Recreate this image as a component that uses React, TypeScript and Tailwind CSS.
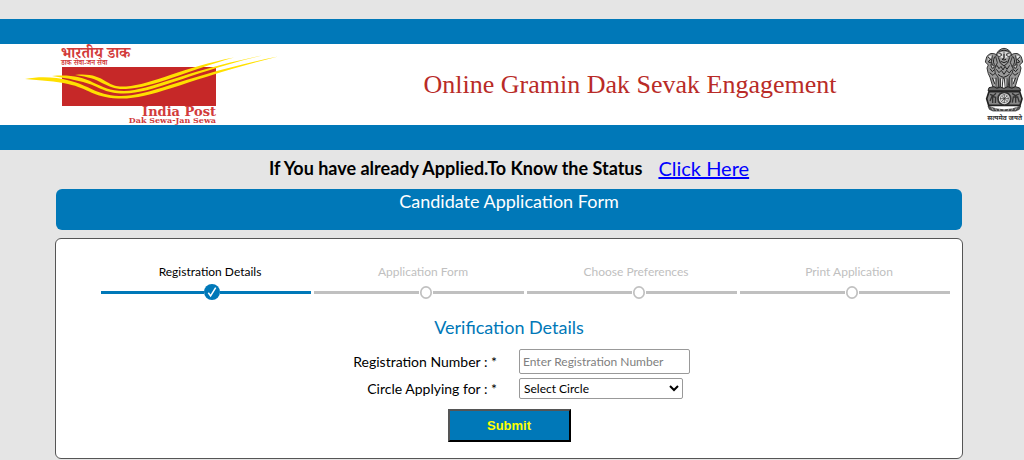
const steps = [
  { label: "Registration Details", active: true },
  { label: "Application Form", active: false },
  { label: "Choose Preferences", active: false },
  { label: "Print Application", active: false },
];

export default function App() {
  return (
    <div className="bg-[#e5e5e5] pt-[19px] font-['Lato','Open_Sans',sans-serif] text-black">
      <Header />
      <main className="pb-px pl-[55px] pr-[61px]">
        <p className="flex h-[39px] items-center justify-center gap-4 pb-1 text-lg font-bold">
          If You have already Applied.To Know the Status
          <a href="#status" className="text-xl font-normal text-[#0000ff] underline">
            Click Here
          </a>
        </p>
        <h2 className="mx-px h-[41px] rounded-md bg-[#0078b8] text-center text-lg leading-6 text-white">
          Candidate Application Form
        </h2>
        <section className="mt-2 rounded-md border border-[#555] bg-white pb-4 pt-6">
          <Stepper />
          <VerificationForm />
        </section>
      </main>
    </div>
  );
}

function Header() {
  return (
    <header className="flex h-[131px] items-center border-y-[25px] border-[#0078b8] bg-white">
      <IndiaPostLogo />
      <h1 className="flex-1 text-center font-['Liberation_Serif',serif] text-[26px] text-[#b92b27]">
        Online Gramin Dak Sevak Engagement
      </h1>
      <Emblem />
    </header>
  );
}

function Stepper() {
  return (
    <ol className="grid grid-cols-4 gap-[3px] pl-[45px] pr-3">
      {steps.map((step) => (
        <li key={step.label} className={step.active ? "text-black" : "text-[#c0c0c0]"}>
          <span className="block pl-2 text-center text-xs leading-[18px]">{step.label}</span>
          <span className="mt-px flex h-5 items-center">
            <span className={`h-[3px] flex-[8] ${step.active ? "bg-[#0078b8]" : "bg-[#c0c0c0]"}`} />
            {step.active ? (
              <svg viewBox="0 0 16 16" className="h-4 w-4" aria-hidden="true">
                <circle cx="8" cy="8" r="8" fill="#0078b8" />
                <path d="M4.3 8.8 6.6 12 11.7 3.6" fill="none" stroke="#fff" strokeWidth="1.5" />
              </svg>
            ) : (
              <svg viewBox="0 0 14 16" className="h-4 w-[14px]" aria-hidden="true">
                <ellipse cx="7" cy="8.5" rx="5.2" ry="5.7" fill="#fff" stroke="#c0c0c0" strokeWidth="1.7" />
              </svg>
            )}
            <span className={`h-[3px] flex-[7] ${step.active ? "bg-[#0078b8]" : "bg-[#c0c0c0]"}`} />
          </span>
        </li>
      ))}
    </ol>
  );
}

function VerificationForm() {
  return (
    <form className="mt-[11px] text-center" onSubmit={(e) => e.preventDefault()}>
      <h3 className="text-lg leading-7 text-[#0078b8]">Verification Details</h3>
      <div className="mt-2 grid grid-cols-2 items-center gap-y-1 text-left">
        <label htmlFor="registration" className="pr-3 text-right text-sm">
          Registration Number : *
        </label>
        <div className="flex pl-[10px]">
          <input
            id="registration"
            type="text"
            placeholder="Enter Registration Number"
            className="h-[25px] w-[171px] rounded-xs border border-[#999] px-[3px] text-xs placeholder:text-[#808080]"
          />
        </div>
        <label htmlFor="circle" className="pr-3 text-right text-sm">
          Circle Applying for : *
        </label>
        <div className="flex pl-[10px]">
          <select id="circle" className="h-[21px] w-[164px] rounded-xs border border-[#999] bg-white text-xs">
            <option>Select Circle</option>
          </select>
        </div>
      </div>
      <button
        type="submit"
        className="mt-[10px] h-[33px] w-[123px] border-2 border-b-black border-l-[#555] border-r-black border-t-[#555] bg-[#0078b8] font-['Liberation_Sans',sans-serif] text-[13px] font-bold text-[#ffff00]"
      >
        Submit
      </button>
    </form>
  );
}

function IndiaPostLogo() {
  return (
    <svg viewBox="0 0 252 80" className="ml-6 h-20 w-[252px] shrink-0 overflow-visible" role="img" aria-label="India Post">
      <g fill="#d23b3b" fontWeight="700" fontFamily="'Noto Serif Devanagari','Noto Sans Devanagari','Noto Sans',serif">
        <text x="37" y="13" fontSize="15">भारतीय डाक</text>
        <text x="37" y="20" fontSize="7">डाक सेवा-जन सेवा</text>
      </g>
      <path d="M38 22H192V61H38z" fill="#c62828" />
      <g fill="#ffe000">
        <path d="M1 34C18 31 32 32.500 45 35.500C65 40 71 50 95 51C125 52 160 30.500 254 11.500C160 35 127 55 94 53.500C68 52 65 43.500 44 39C32 36 16 35.500 1 34Z" />
        <path d="M28 31C46 29.500 58 32 69 37.500C80 42 85 46 100 46C128 45 160 26 238 10.500C162 29 130 48 100 48.500C82 48.500 77 43 67 39.500C57 36 45 33.500 28 31Z" />
        <path d="M51 30C66 28.500 74 31.500 82 36.500C90 41 93 42 102 41.500C128 39.500 160 22 210 12.500C162 26 130 42.500 102 44C90 44.500 86 41.500 79 38.500C71 34 65 32 51 30Z" />
      </g>
      <g fill="#d23b3b" fontFamily="'DejaVu Serif',serif" fontWeight="700" textAnchor="end">
        <text x="192" y="71" fontSize="13">India Post</text>
        <text x="192" y="78" fontSize="8">Dak Sewa-Jan Sewa</text>
      </g>
    </svg>
  );
}

function Emblem() {
  return (
    <svg viewBox="0 0 120 228" className="h-[76px] w-10 shrink-0" role="img" aria-label="State Emblem of India">
      <g fill="#999" stroke="#333" strokeWidth="3">
        <path d="M40 24Q18 12 8 30L4 45L13 54L9 63Q12 82 18 91L27 121H43L45 92Z" />
        <path d="M80 24Q102 12 112 30L116 45L107 54L111 63Q108 82 102 91L93 121H77L75 92Z" />
        <path d="M43 12Q60-4 77 12L85 29L79 47L88 66Q86 80 76 90L72 125H64L61 94H57L54 125H45L42 90Q31 81 32 66L40 47L35 29Z" />
      </g>
      <g fill="#e8e8e8">
        <path d="M29 96H35L38 119H33ZM85 96H91L87 119H82ZM49 95H55L53 121H49ZM64 95H69L68 121H65Z" />
        <path d="M45 17L56 14L57 33L49 31ZM75 17L64 14L63 33L71 31ZM15 27L26 25L22 36L12 38ZM105 27L94 25L98 36L108 38Z" />
      </g>
      <g fill="none" stroke="#222" strokeWidth="3">
        <path d="M45 13Q60 6 75 13M45 24L54 21M66 21L75 24M60 21V34L54 37Q60 41 66 37M50 43Q60 51 70 43M43 31L49 48L60 57L71 48L77 31" />
        <path d="M12 31L20 36L13 45L22 48M108 31L100 36L107 45L98 48M25 25Q19 44 27 64M95 25Q101 44 93 64M32 29Q23 47 36 59M88 29Q97 47 84 59" />
        <path d="M39 55L45 65L51 58L57 69L63 58L69 67L77 55M37 67L45 77L52 70L60 82L68 70L76 78L84 68M42 82L50 88L59 91L69 87L77 81" />
        <path d="M18 65L25 74L31 68M17 77L27 85L34 78M102 65L95 74L89 68M103 77L93 85L86 78M25 92L33 112M36 92V120M84 92V120M95 92L87 112M49 94V121M69 94V121" />
      </g>
      <g fill="#d5d5d5" stroke="#333" strokeWidth="3">
        <path d="M39 17L49 19L53 25L46 29L39 26ZM81 17L71 19L67 25L74 29L81 26ZM20 53L29 55L31 61L24 64ZM100 53L91 55L89 61L96 64Z" />
      </g>
      <path d="M15 122L30 119L38 124L49 120L60 124L72 119L83 124L94 119L107 123L110 131H12Z" fill="#666" stroke="#222" strokeWidth="3" />
      <path d="M15 134H107L114 155L108 175H14L8 155Z" fill="#888" stroke="#222" strokeWidth="5" />
      <g fill="none" stroke="#333" strokeWidth="3">
        <circle cx="61" cy="155" r="19" fill="#ddd" strokeWidth="5" />
        <circle cx="61" cy="155" r="12" strokeDasharray="2 2" />
        <path d="M61 142V168M48 155H74M52 146L70 164M52 164L70 146" strokeWidth="2" />
        <path d="M18 142L28 146L36 139M18 162L24 148L35 151L34 168M26 151V168M84 139L94 146L105 141M85 167L88 150L101 150L106 166M95 151V167" strokeWidth="4" />
      </g>
      <path d="M12 177Q61 200 110 177L106 187L95 192H27L16 187Z" fill="#555" stroke="#222" strokeWidth="2" />
      <path d="M23 182L28 190M34 184L38 191M46 185L48 192M60 186V192M74 185L72 192M86 184L83 191M98 181L93 190" stroke="#ddd" strokeWidth="2" />
      <text x="62" y="219" textAnchor="middle" fontSize="20" fontWeight="700" fill="#333" fontFamily="'Noto Sans Devanagari','Noto Sans',sans-serif">
        सत्यमेव जयते
      </text>
    </svg>
  );
}
